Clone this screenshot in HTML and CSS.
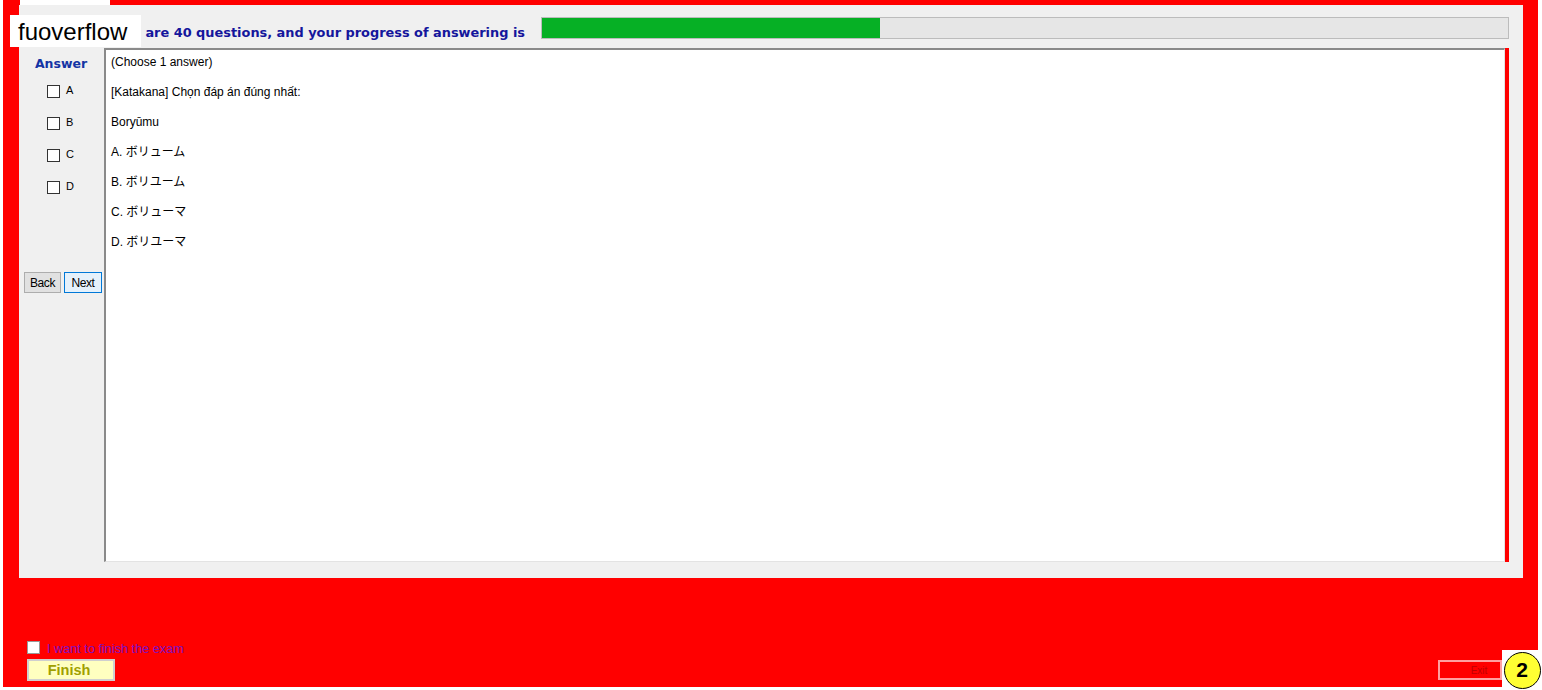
FILE: index.html
```html
<!DOCTYPE html>
<html lang="vi">
<head>
<meta charset="utf-8">
<title>Exam</title>
<link rel="stylesheet" href="styles.css">
</head>
<body>
<div class="frame">
  <div class="panel">
    <div class="header">
      <div class="header-text">are 40 questions, and your progress of answering is</div>
      <div class="progress"><div class="progress-fill" style="width:35%"></div></div>
    </div>
    <div class="body">
      <div class="side">
        <div class="answer-title">Answer</div>
        <label class="opt"><span class="box"></span><span class="opt-label">A</span></label>
        <label class="opt"><span class="box"></span><span class="opt-label">B</span></label>
        <label class="opt"><span class="box"></span><span class="opt-label">C</span></label>
        <label class="opt"><span class="box"></span><span class="opt-label">D</span></label>
        <div class="nav">
          <button class="btn btn-back">Back</button>
          <button class="btn btn-next">Next</button>
        </div>
      </div>
      <div class="question">
        <div class="line first">(Choose 1 answer)</div>
        <div class="line">[Katakana] Chọn đáp án đúng nhất:</div>
        <div class="line">Boryūmu</div>
        <div class="line">A. ボリューム</div>
        <div class="line">B. ボリユーム</div>
        <div class="line">C. ボリューマ</div>
        <div class="line">D. ボリユーマ</div>
      </div>
      <div class="redbar"></div>
      <div class="spacer"></div>
    </div>
  </div>
  <div class="footer">
    <div class="footer-left">
      <div class="finish-row"><span class="finish-box"></span><span class="finish-label">I want to finish the exam</span></div>
      <button class="finish-btn">Finish</button>
    </div>
    <button class="exit-btn">Exit</button>
  </div>
</div>
<div class="tab"></div>
<div class="logo">fuoverflow</div>
<div class="badge"><div class="circle">2</div></div>
</body>
</html>
```
FILE: styles.css
```css
html, body {
  margin: 0;
  padding: 0;
  background: #ffffff;
}
body {
  width: 1542px;
  height: 690px;
  position: relative;
  overflow: hidden;
  font-family: "Liberation Sans", Arial, sans-serif;
}
.frame {
  margin-left: 3px;
  width: 1535px;
  height: 687px;
  background: #ff0000;
  display: flex;
  flex-direction: column;
}
.panel {
  margin-top: 5px;
  margin-left: 16px;
  width: 1504px;
  height: 573px;
  background: #f0f0f0;
  display: flex;
  flex-direction: column;
}
.header {
  margin-top: 12px;
  height: 22px;
  display: flex;
  align-items: center;
}
.header-text {
  width: 506px;
  padding-right: 16px;
  text-align: right;
  white-space: nowrap;
  font-family: "DejaVu Sans", Verdana, sans-serif;
  font-weight: bold;
  font-size: 12.9px;
  color: #14169c;
  padding-top: 8px;
}
.progress {
  flex: 1;
  margin-right: 14px;
  height: 20px;
  background: #e6e6e6;
  border: 1px solid #bcbcbc;
  display: flex;
}
.progress-fill {
  background: #06b025;
  height: 100%;
}
.body {
  margin-top: 9px;
  height: 514px;
  display: flex;
}
.side {
  width: 85px;
  display: flex;
  flex-direction: column;
}
.answer-title {
  margin-top: 8px;
  height: 16px;
  line-height: 16px;
  text-align: center;
  font-family: "DejaVu Sans", Verdana, sans-serif;
  font-weight: bold;
  font-size: 12.5px;
  color: #1434a4;
  margin-left: -1px;
}
.opt {
  margin-top: 3px;
  height: 32px;
  display: flex;
  align-items: center;
  padding-left: 28px;
  margin-bottom: -3px;
}
.box {
  width: 11px;
  height: 11px;
  border: 1px solid #333333;
  background: #ffffff;
}
.opt-label {
  margin-left: 6px;
  font-size: 11px;
  color: #000000;
  margin-top: -2px;
}
.nav {
  margin-top: 72px;
  padding-left: 5px;
  display: flex;
  gap: 3px;
}
.btn {
  height: 21px;
  padding: 0;
  font-family: "Liberation Sans", Arial, sans-serif;
  font-size: 12px;
  color: #000000;
  letter-spacing: -0.4px;
}
.btn-back {
  width: 37px;
  background: #e1e1e1;
  border: 1px solid #adadad;
}
.btn-next {
  width: 38px;
  background: #e5f1fb;
  border: 1px solid #0078d7;
}
.question {
  flex: 1;
  background: #ffffff;
  border-top: 2px solid #8a8a8a;
  border-left: 2px solid #8a8a8a;
  border-bottom: 1px solid #e3e3e3;
  border-right: 1px solid #e3e3e3;
  padding: 0 5px;
  font-family: "Liberation Sans", "Noto Sans CJK JP", Arial, sans-serif;
  font-size: 12px;
  color: #000000;
}
.line {
  line-height: 30px;
  height: 30px;
  white-space: nowrap;
}
.line.first {
  margin-top: -3px;
  height: 30px;
}
.redbar {
  width: 4px;
  background: #ff0000;
}
.spacer {
  width: 14px;
}
.footer {
  flex: 1;
  display: flex;
  align-items: flex-end;
  justify-content: space-between;
  padding: 0 36px 6px 24px;
}
.footer-left {
  display: flex;
  flex-direction: column;
}
.finish-row {
  display: flex;
  align-items: center;
  height: 14px;
  margin-bottom: 5px;
}
.finish-box {
  width: 11px;
  height: 11px;
  background: #ffffff;
  border: 1px solid #999999;
}
.finish-label {
  margin-left: 7px;
  font-size: 12.7px;
  color: #8010c0;
  margin-top: 3px;
}
.finish-btn {
  width: 88px;
  height: 22px;
  padding: 0 4px 0 0;
  background: #ffffc0;
  border: 2px solid #cfcfcf;
  font-family: "Liberation Sans", Arial, sans-serif;
  font-weight: bold;
  font-size: 14.5px;
  color: #a0a000;
}
.exit-btn {
  width: 64px;
  height: 20px;
  margin-bottom: 1px;
  padding: 0 0 0 18px;
  background: #ff0000;
  border: 2px solid #ffa0a0;
  font-family: "Liberation Sans", Arial, sans-serif;
  font-size: 10px;
  color: #c00000;
}
.tab {
  position: absolute;
  left: 20px;
  top: 0;
  width: 90px;
  height: 5px;
  background: #ffffff;
}
.logo {
  position: absolute;
  left: 10px;
  top: 15px;
  width: 123px;
  height: 32px;
  padding-left: 8px;
  background: #ffffff;
  font-family: "Liberation Sans", Arial, sans-serif;
  font-size: 24px;
  line-height: 33px;
  color: #000000;
}
.badge {
  position: absolute;
  left: 1502px;
  top: 650px;
  width: 40px;
  height: 40px;
  background: #ffffff;
  display: flex;
  align-items: center;
  justify-content: center;
}
.circle {
  width: 35px;
  height: 35px;
  border-radius: 50%;
  border: 1.5px solid #000000;
  background: #ffff33;
  display: flex;
  align-items: center;
  justify-content: center;
  font-family: "Liberation Sans", Arial, sans-serif;
  font-weight: bold;
  font-size: 21px;
  color: #000000;
}
```
